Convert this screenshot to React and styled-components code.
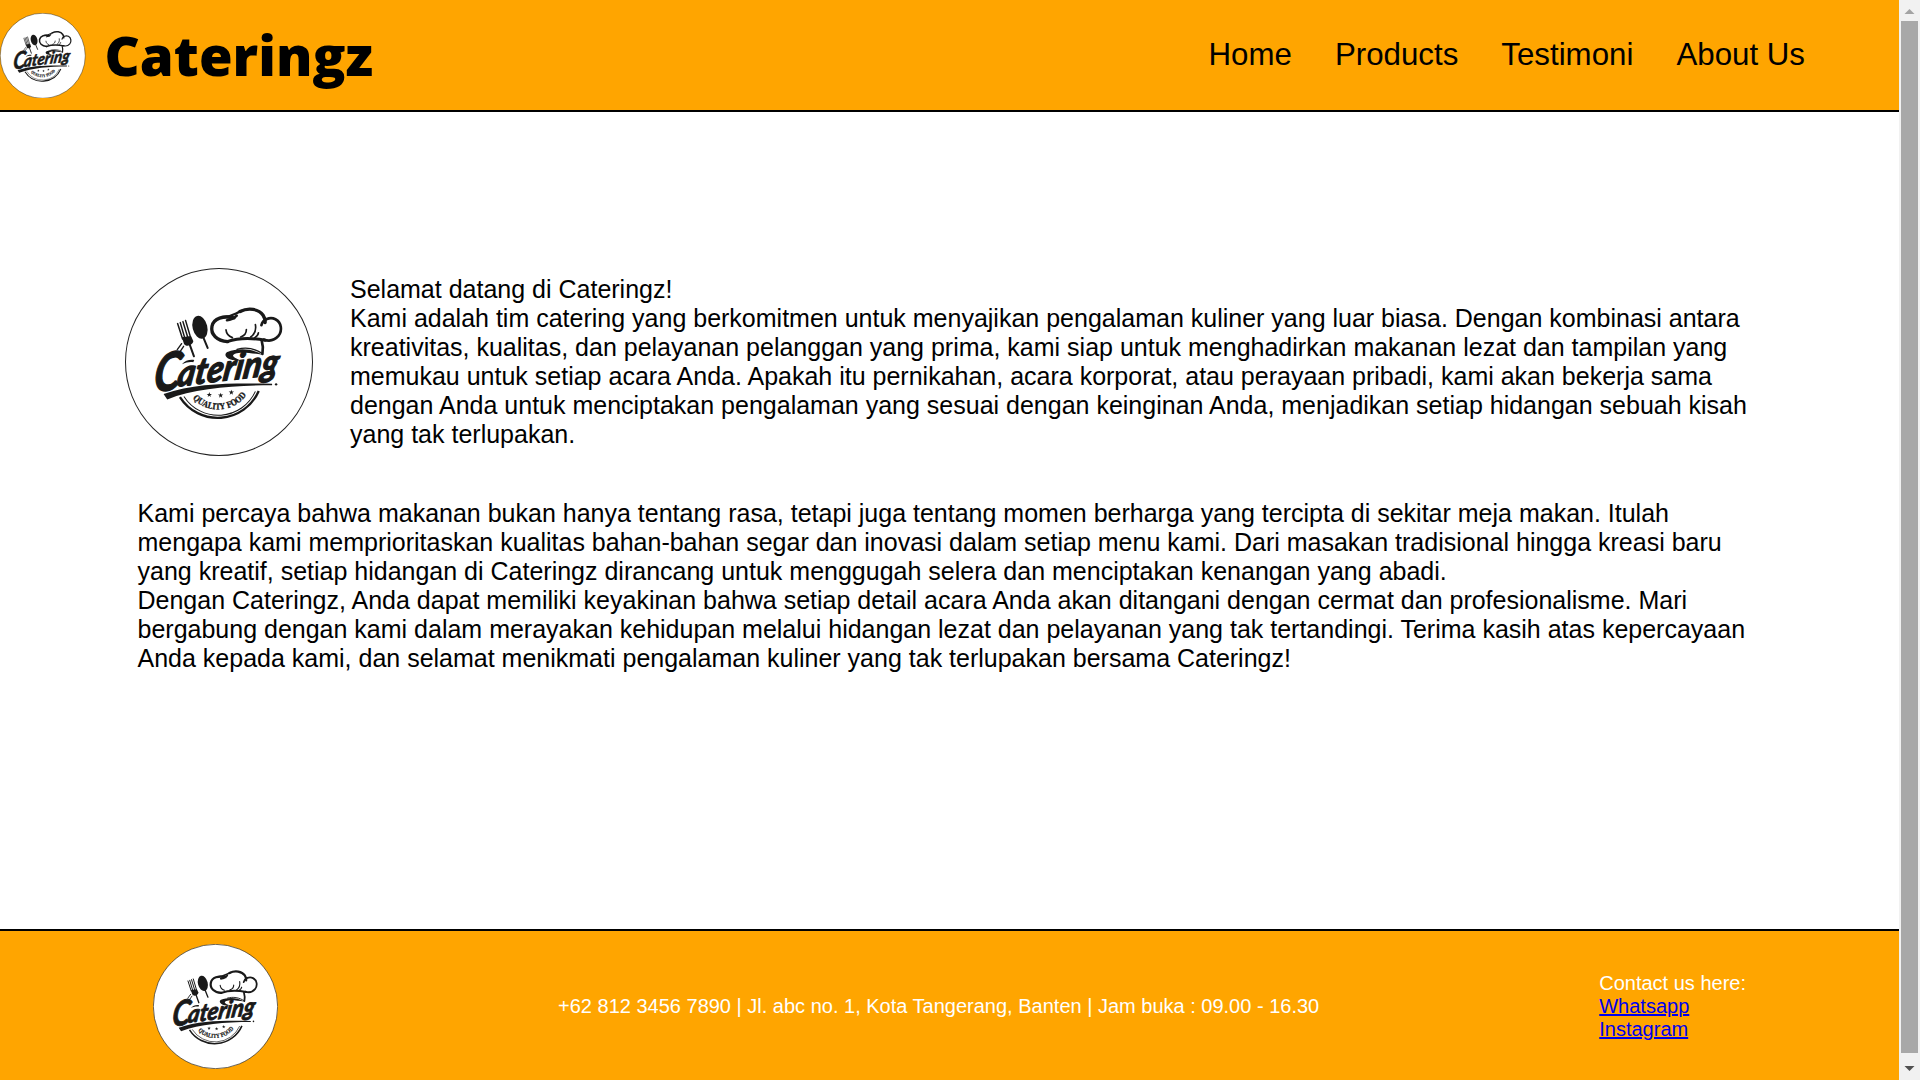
import React, { useId } from "react";
import styled, { createGlobalStyle } from "styled-components";

const GlobalStyle = createGlobalStyle`
  * { box-sizing: border-box; }
  body {
    margin: 0;
    background: #fff;
    color: #000;
    font-family: "Liberation Sans", Arial, sans-serif;
    overflow: hidden;
  }
`;

const Window = styled.div`
  display: flex;
  width: 100%;
  height: 100vh;
`;

const Page = styled.div`
  flex: 1;
  display: flex;
  flex-direction: column;
`;

const Header = styled.header`
  display: flex;
  align-items: center;
  justify-content: space-between;
  height: 112px;
  padding-right: 94px;
  background: orange;
  border-bottom: 2px solid #000;
`;

const Brand = styled.div`
  display: flex;
  align-items: center;
  gap: 19px;
  padding-top: 1px;
`;

const BrandName = styled.h1`
  margin: 0;
  padding-bottom: 2px;
  font: 800 54.5px/70px "Open Sans", sans-serif;
`;

const Nav = styled.nav`
  display: flex;
  gap: 43.1px;
`;

const NavLink = styled.a`
  color: #000;
  font-size: 31.25px;
  line-height: 36px;
  text-decoration: none;
`;

const Main = styled.main`
  flex: 1;
  display: flex;
  flex-direction: column;
  gap: 43px;
  padding: 156px 0 0 125px;
`;

const Intro = styled.section`
  display: flex;
  align-items: center;
  gap: 37px;
`;

const Copy = styled.p`
  margin: 0;
  padding-left: ${(p) => (p.$indent ? "12.5px" : "0")};
  font-size: 25px;
  line-height: 29px;
  white-space: nowrap;
`;

const Footer = styled.footer`
  display: flex;
  align-items: center;
  justify-content: space-between;
  height: 151px;
  padding: 2px 153px 0 153px;
  background: orange;
  border-top: 2px solid #000;
  color: #fff;
  font-size: 20px;
  line-height: 23px;
`;

const Contact = styled.div`
  display: flex;
  flex-direction: column;
  align-items: flex-start;
`;

const ContactLink = styled.a`
  color: #0000ee;
  text-decoration: underline;
`;

const LogoSvg = styled.svg`
  display: block;
  flex: none;
  width: ${(p) => p.$size}px;
  height: ${(p) => p.$size}px;
`;

const Script = styled.text`
  font-family: Lato, sans-serif;
  font-weight: 700;
  font-style: italic;
`;

const Motto = styled.text`
  font: 700 25px "DejaVu Serif", serif;
`;

const Scrollbar = styled.div`
  display: flex;
  flex-direction: column;
  align-items: center;
  width: 21px;
  background: #f1f1f1;
`;

const Arrow = styled.svg`
  display: block;
  flex: none;
  width: 17px;
  height: ${(p) => p.$height}px;
  margin-right: 1px;
`;

const Thumb = styled.div`
  flex: 1;
  width: 17px;
  margin-right: 1px;
  background: #a8a8a8;
`;

const STAR = "M0-8 2-2.5 8-2.5 3 1.2 5 7 0 3.4-5 7-3 1.2-8-2.5-2-2.5Z";

function Logo({ size }) {
  const arc = useId();
  const ink = "#191919";
  const line = { fill: "none", stroke: ink, strokeLinecap: "round", strokeLinejoin: "round" };
  return (
    <LogoSvg $size={size} viewBox="30.5 24.5 563 563" role="img" aria-label="Catering Quality Food">
      <circle cx="312" cy="306" r="280" fill="#fff" stroke="#222" strokeWidth="3" />

      {/* chef hat */}
      <g {...line}>
        <path strokeWidth="10" d="M338 245C306 242 286 224 291 199C296 174 325 167 357 174" />
        <path strokeWidth="7" d="M322 172C352 171 360 160 380 153" />
        <path strokeWidth="10" d="M375 155C400 142 431 147 444 166C449 174 451 181 450 188" />
        <path strokeWidth="8" d="M336 181C350 180 358 174 365 167" />
        <path strokeWidth="8" d="M439 196C443 178 465 170 481 178C500 188 502 213 490 228C478 242 461 244 446 239" />
        <path strokeWidth="9" d="M336 245C363 236 400 231 450 241" />
        <path strokeWidth="5" d="M333 210C334 222 341 229 352 233M394 209C394 219 387 228 377 231M421 194C424 211 417 224 407 231M430 219C429 226 425 230 419 233" />
        <path strokeWidth="8" d="M440 243C444 256 445 268 442 282" />
        <path strokeWidth="4" d="M366 268C392 261 418 265 441 280" />
      </g>
      <path fill={ink} d="M442 284C405 263 367 265 337 276C326 282 331 296 352 300L378 302C352 292 349 286 360 281C380 275 410 280 442 284Z" />

      {/* fork and spoon */}
      <g {...line}>
        <path strokeWidth="4.5" d="M188 191 203 237M196 188 210 236M204 185 219 234M212 182 227 233" />
        <path strokeWidth="6" d="M223 250 237 289M265 232 278 264" />
        <path strokeWidth="4" d="M187 269 200 251M196 274 206 259" />
      </g>
      <path fill={ink} d="M201 232 228 228 235 243C235 254 214 264 207 251Z" />
      <ellipse cx="255" cy="202" rx="22" ry="35" fill={ink} transform="rotate(-14 255 202)" />

      {/* lettering */}
      <g fill={ink} stroke={ink} strokeWidth="4" strokeLinejoin="round">
        <Script fontSize="158" x="0" y="0" textLength="80" lengthAdjust="spacingAndGlyphs" transform="translate(113 395) rotate(-5) skewX(-12)">C</Script>
        <Script fontSize="108" x="0" y="0" textLength="304" lengthAdjust="spacingAndGlyphs" transform="translate(184 380) rotate(-7) skewX(-16)">atering</Script>
      </g>
      <path fill={ink} d="M201 313C210 301 225 298 238 300L235 307C223 305 214 308 201 313Z" />
      <path fill={ink} d="M146 402C245 367 360 370 471 371L471 376C355 376 240 385 157 418Z" />
      <circle cx="483" cy="373" r="3.5" fill={ink} />

      {/* badge */}
      <path {...line} strokeLinecap="butt" strokeWidth="7" d="M195 411A134 134 0 0 0 431 393" />
      <path {...line} strokeLinecap="butt" strokeWidth="3" d="M207 409A122 122 0 0 0 421 394" />
      {[[283, 404], [317, 406], [349, 397]].map(([x, y]) => (
        <path key={x} fill={ink} d={STAR} transform={`translate(${x} ${y})`} />
      ))}
      <path id={arc} fill="none" d="M233 415A105 105 0 0 0 404 389" />
      <Motto fill={ink} stroke={ink} strokeWidth="0.8">
        <textPath href={`#${arc}`} textLength="184" lengthAdjust="spacingAndGlyphs">QUALITY FOOD</textPath>
      </Motto>
    </LogoSvg>
  );
}

const NAV = ["Home", "Products", "Testimoni", "About Us"];

const INTRO = [
  "Selamat datang di Cateringz!",
  "Kami adalah tim catering yang berkomitmen untuk menyajikan pengalaman kuliner yang luar biasa. Dengan kombinasi antara",
  "kreativitas, kualitas, dan pelayanan pelanggan yang prima, kami siap untuk menghadirkan makanan lezat dan tampilan yang",
  "memukau untuk setiap acara Anda. Apakah itu pernikahan, acara korporat, atau perayaan pribadi, kami akan bekerja sama",
  "dengan Anda untuk menciptakan pengalaman yang sesuai dengan keinginan Anda, menjadikan setiap hidangan sebuah kisah",
  "yang tak terlupakan.",
];

const BODY = [
  "Kami percaya bahwa makanan bukan hanya tentang rasa, tetapi juga tentang momen berharga yang tercipta di sekitar meja makan. Itulah",
  "mengapa kami memprioritaskan kualitas bahan-bahan segar dan inovasi dalam setiap menu kami. Dari masakan tradisional hingga kreasi baru",
  "yang kreatif, setiap hidangan di Cateringz dirancang untuk menggugah selera dan menciptakan kenangan yang abadi.",
  "Dengan Cateringz, Anda dapat memiliki keyakinan bahwa setiap detail acara Anda akan ditangani dengan cermat dan profesionalisme. Mari",
  "bergabung dengan kami dalam merayakan kehidupan melalui hidangan lezat dan pelayanan yang tak tertandingi. Terima kasih atas kepercayaan",
  "Anda kepada kami, dan selamat menikmati pengalaman kuliner yang tak terlupakan bersama Cateringz!",
];

const Lines = ({ items }) =>
  items.map((t) => (
    <React.Fragment key={t}>
      {t}
      <br />
    </React.Fragment>
  ));

export default function App() {
  return (
    <Window>
      <GlobalStyle />
      <Page>
        <Header>
          <Brand>
            <Logo size={85.5} />
            <BrandName>Cateringz</BrandName>
          </Brand>
          <Nav>
            {NAV.map((n) => (
              <NavLink key={n} href="#">{n}</NavLink>
            ))}
          </Nav>
        </Header>
        <Main>
          <Intro>
            <Logo size={188} />
            <Copy><Lines items={INTRO} /></Copy>
          </Intro>
          <Copy $indent><Lines items={BODY} /></Copy>
        </Main>
        <Footer>
          <Logo size={125} />
          <span>+62 812 3456 7890 | Jl. abc no. 1, Kota Tangerang, Banten | Jam buka : 09.00 - 16.30</span>
          <Contact>
            <span>Contact us here:</span>
            <ContactLink href="#">Whatsapp</ContactLink>
            <ContactLink href="#">Instagram</ContactLink>
          </Contact>
        </Footer>
      </Page>
      <Scrollbar>
        <Arrow $height={21} viewBox="0 0 17 21"><path d="M8.5 9 13.5 14H3.5Z" fill="#a3a3a3" /></Arrow>
        <Thumb />
        <Arrow $height={27} viewBox="0 0 17 27"><path d="M8.5 18 13.5 13H3.5Z" fill="#505050" /></Arrow>
      </Scrollbar>
    </Window>
  );
}
